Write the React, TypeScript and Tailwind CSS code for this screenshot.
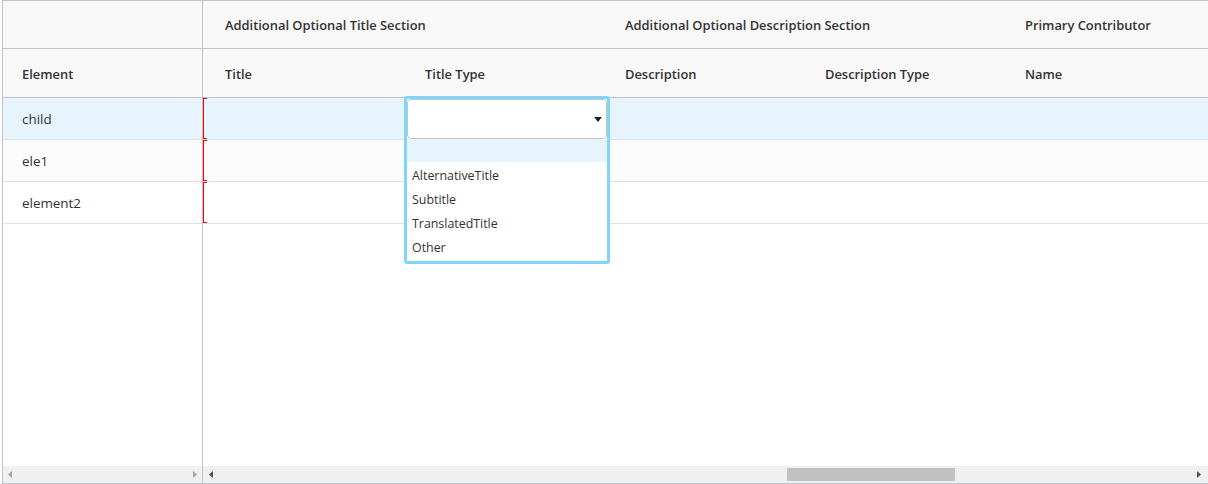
import React from "react";

const font = { fontFamily: '"Open Sans", "Noto Sans", Arial, sans-serif' };

const rows = [
  { name: "child", active: true },
  { name: "ele1", alt: true },
  { name: "element2" },
];

const options = ["AlternativeTitle", "Subtitle", "TranslatedTitle", "Other"];

function Arrow({ dir, dark }: { dir: "left" | "right"; dark?: boolean }) {
  return (
    <svg width="4" height="7" viewBox="0 0 4 7" className={dark ? "fill-[#505050]" : "fill-[#a3a3a3]"}>
      {dir === "left" ? <path d="M4 0 L0 3.5 L4 7 Z" /> : <path d="M0 0 L4 3.5 L0 7 Z" />}
    </svg>
  );
}

function TitleTypeDropdown() {
  return (
    <div className="absolute left-[1px] top-[-2px] z-10 w-[206px] rounded-[3px] border-[3px] border-[#80d5fd] bg-white">
      <div className="flex h-[40px] items-center justify-end rounded-[4px] border border-[#c6c6c6] bg-white pr-[4px]">
        <svg width="8" height="5" viewBox="0 0 8 5" className="fill-[#222]">
          <path d="M0 0 H8 L4 5 Z" />
        </svg>
      </div>
      <div className="h-[23px] bg-[#e8f4fd]" />
      <div className="pb-[1px] pt-[2px]">
        {options.map((o) => (
          <div key={o} className="flex h-[24px] items-center px-[5px] pt-[1px] text-[12.4px] text-[#333]">
            {o}
          </div>
        ))}
      </div>
    </div>
  );
}

export default function App() {
  const cols = ["Title", "Title Type", "Description", "Description Type", "Name"];
  return (
    <div style={font} className="h-[484px] w-[1208px] overflow-hidden bg-white">
      <div className="ml-[2px] flex h-[484px] w-[1220px] flex-col border-y border-l border-[#c2c2cc]">
        <div className="flex min-h-0 flex-1">
          {/* left pane */}
          <div className="w-[200px] shrink-0 border-r border-[#c2c2cc]">
            <div className="h-[48px] border-b border-[#c2c2cc] bg-[#f8f8f8]" />
            <div className="flex h-[49px] items-center border-b border-[#c2c2cc] bg-[#f8f8f8] pl-[19px] pt-[3px] text-[12.9px] font-semibold text-[#333]">
              Element
            </div>
            {rows.map((r) => (
              <div
                key={r.name}
                className={`flex h-[42px] items-center border-b border-[#e0e0e6] pl-[19px] pt-[1px] text-[13.4px] text-[#333] ${
                  r.active ? "bg-[#e8f4fd]" : r.alt ? "bg-[#fcfcfc]" : "bg-white"
                }`}
              >
                {r.name}
              </div>
            ))}
          </div>
          {/* right pane */}
          <div className="min-w-0 flex-1">
            <div className="flex h-[48px] border-b border-[#c2c2cc] bg-[#f8f8f8] pt-[3px] text-[12.9px] font-semibold text-[#333]">
              <div className="flex w-[400px] shrink-0 items-center pl-[22px]">Additional Optional Title Section</div>
              <div className="flex w-[400px] shrink-0 items-center pl-[22px]">Additional Optional Description Section</div>
              <div className="flex w-[400px] shrink-0 items-center pl-[22px]">Primary Contributor</div>
            </div>
            <div className="flex h-[49px] border-b border-[#c2c2cc] bg-[#f8f8f8] pt-[3px] text-[12.9px] font-semibold text-[#333]">
              {cols.map((c) => (
                <div key={c} className="flex w-[200px] shrink-0 items-center pl-[22px]">
                  {c}
                </div>
              ))}
            </div>
            {rows.map((r) => (
              <div
                key={r.name}
                className={`relative flex h-[42px] border-b border-[#e0e0e6] ${
                  r.active ? "bg-[#e8f4fd]" : r.alt ? "bg-[#fcfcfc]" : "bg-white"
                }`}
              >
                <div className="w-[200px] shrink-0">
                  <div className="h-[41px] w-[4px] border-y border-l border-[#ff0000]" />
                </div>
                <div className="relative w-[200px] shrink-0">{r.active && <TitleTypeDropdown />}</div>
              </div>
            ))}
          </div>
        </div>
        {/* scrollbars */}
        <div className="flex h-[17px] shrink-0 bg-[#f0f0f0]">
          <div className="flex w-[200px] shrink-0 items-center justify-between border-r border-[#c2c2cc] px-[5px]">
            <Arrow dir="left" />
            <Arrow dir="right" />
          </div>
          <div className="relative flex flex-1 items-center">
            <div className="flex w-[1004px] items-center justify-between px-[6px]">
              <Arrow dir="left" dark />
              <Arrow dir="right" dark />
            </div>
            <div className="absolute left-[584px] top-[2px] h-[13px] w-[168px] bg-[#c1c1c1]" />
          </div>
        </div>
      </div>
    </div>
  );
}
